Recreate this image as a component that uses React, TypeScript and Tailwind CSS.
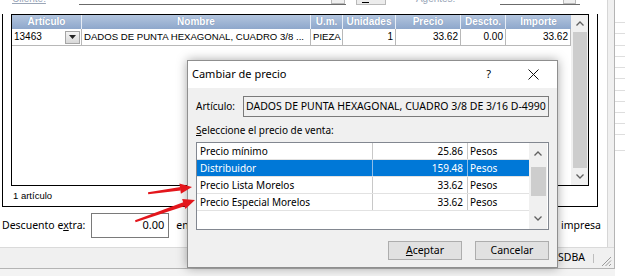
import React from "react";

const COLS = [
  { name: "Artículo", w: "w-[70px]" },
  { name: "Nombre", w: "w-[229px]" },
  { name: "U.m.", w: "w-[32px]" },
  { name: "Unidades", w: "w-[53px]" },
  { name: "Precio", w: "w-[65px]" },
  { name: "Descto.", w: "w-[45px]" },
  { name: "Importe", w: "w-[65px]" },
];

const PRECIOS = [
  { name: "Precio mínimo", price: "25.86" },
  { name: "Distribuidor", price: "159.48", selected: true },
  { name: "Precio Lista Morelos", price: "33.62" },
  { name: "Precio Especial Morelos", price: "33.62" },
];

const STRIP_LINES = [11, 12, 11, 11, 11, 12, 11, 11, 11, 11, 16];

function Chevron({ up }: { up?: boolean }) {
  return (
    <svg width="8" height="5" viewBox="0 0 8 5">
      <polyline
        points={up ? "0.5,4.5 4,1 7.5,4.5" : "0.5,0.5 4,4 7.5,0.5"}
        fill="none"
        stroke="#606060"
        strokeWidth="1.3"
      />
    </svg>
  );
}

function TopControls() {
  return (
    <div className="h-[14px] flex items-start text-[10px] text-[#9aa6b8] overflow-hidden">
      <span className="ml-[12px] -mt-[9px] underline">Cliente:</span>
      <div className="ml-[33px] w-[267px] h-[5px] border-b border-[#6b6b6b] flex justify-end">
        <div className="w-[14px] h-[4px] mr-[1px] border border-t-0 border-[#b9b9b9] bg-[#efefef]" />
      </div>
      <div className="ml-[10px] w-[30px] h-[5px] border border-t-0 border-[#b9b9b9] bg-[#ececec] flex items-end pl-[5px]">
        <div className="w-[7px] h-[1px] mb-[1px] bg-black" />
      </div>
      <span className="ml-[30px] -mt-[9px]">Agentes:</span>
      <div className="ml-[45px] w-[80px] h-[5px] border-b border-[#6b6b6b] flex justify-end">
        <div className="w-[13px] h-[4px] mr-[4px] border border-t-0 border-[#b9b9b9] bg-[#efefef]" />
      </div>
    </div>
  );
}

function Grid() {
  return (
    <div className="w-[578px] h-[172px] border border-black flex">
      <div className="w-[559px] flex flex-col">
        <div className="h-[14px] flex bg-linear-to-b from-[#b3c5de] to-[#8ea7cb] text-white font-bold text-[10px] leading-[14px] [text-shadow:0_0_1px_#6d86ad]">
          {COLS.map((c) => (
            <div key={c.name} className={`${c.w} shrink-0 text-center border-r border-[#e6ecf5] last:border-r-0`}>
              {c.name}
            </div>
          ))}
        </div>
        <div className="h-[17px] flex text-[10px] leading-[16px] border-b border-[#b8b8b8]">
          <div className="w-[70px] shrink-0 border-r border-[#b8b8b8] flex items-center justify-between pl-[2px] pr-[1px]">
            <span>13463</span>
            <div className="w-[15px] h-[13px] border border-[#a5a5a5] bg-linear-to-b from-[#f4f4f4] to-[#d8d8d8] flex items-center justify-center">
              <svg width="7" height="4" viewBox="0 0 7 4">
                <polygon points="0,0 7,0 3.5,4" fill="#222" />
              </svg>
            </div>
          </div>
          <div className="w-[229px] shrink-0 border-r border-[#b8b8b8] pl-[2px] whitespace-nowrap text-[9.6px]">
            DADOS DE PUNTA HEXAGONAL, CUADRO 3/8 ...
          </div>
          <div className="w-[32px] shrink-0 border-r border-[#b8b8b8] pl-[2px] text-[9.6px]">PIEZA</div>
          <div className="w-[53px] shrink-0 border-r border-[#b8b8b8] text-right pr-[2px]">1</div>
          <div className="w-[65px] shrink-0 border-r border-[#b8b8b8] text-right pr-[2px]">33.62</div>
          <div className="w-[45px] shrink-0 border-r border-[#b8b8b8] text-right pr-[2px]">0.00</div>
          <div className="w-[65px] shrink-0 border-r border-[#b8b8b8] text-right pr-[2px]">33.62</div>
        </div>
      </div>
      <div className="w-[17px] bg-[#f0f0f0] flex flex-col items-center">
        <div className="h-[17px] flex items-center justify-center">
          <Chevron up />
        </div>
        <div className="w-[14px] h-[136px] bg-[#cdcdcd]" />
        <div className="flex-1 flex items-center justify-center">
          <Chevron />
        </div>
      </div>
    </div>
  );
}

function Dialog() {
  return (
    <div className="absolute left-[187px] top-[60px] w-[371px] h-[208px] border border-[#8f8f8f] bg-[#f0f0f0] shadow-[0_0_10px_rgba(0,0,0,0.35)] flex flex-col font-['Noto_Sans',sans-serif]">
      <div className="h-[27px] bg-white flex items-center pl-[4px] text-[11px]">
        <span>Cambiar de precio</span>
        <span className="ml-auto text-[11px]">?</span>
        <svg width="11" height="11" viewBox="0 0 11 11" className="ml-[37px] mr-[18px]">
          <path d="M0.5 0.5 L10.5 10.5 M10.5 0.5 L0.5 10.5" stroke="#111" strokeWidth="1" />
        </svg>
      </div>
      <div className="flex flex-col px-[8px] pt-[8px] text-[10px]">
        <div className="h-[21px] flex items-center">
          <span className="w-[47px] shrink-0">Artículo:</span>
          <div className="flex-1 h-[21px] border border-[#7a7a7a] bg-[#f0f0f0] px-[2px] flex items-center whitespace-nowrap overflow-hidden text-[10.5px]">
            DADOS DE PUNTA HEXAGONAL, CUADRO 3/8 DE 3/16 D-4990
          </div>
        </div>
        <div className="mt-[6px] h-[14px] leading-[14px]">
          <span className="underline">S</span>eleccione el precio de venta:
        </div>
        <div className="mt-[5px] h-[88px] border border-[#828790] bg-white flex">
          <div className="w-[332px] flex flex-col">
            {PRECIOS.map((p) => (
              <div
                key={p.name}
                className={`h-[17px] flex leading-[16px] border-b border-[#e2e2e2] ${
                  p.selected ? "bg-[#0078d7] text-white" : ""
                }`}
              >
                <div className={`w-[176px] pl-[3px] border-r ${p.selected ? "border-[#8fbde8]" : "border-[#c8c8c8]"}`}>
                  {p.name}
                </div>
                <div className={`w-[95px] text-right pr-[4px] border-r ${p.selected ? "border-[#8fbde8]" : "border-[#c8c8c8]"}`}>
                  {p.price}
                </div>
                <div className="w-[61px] pl-[2px]">Pesos</div>
              </div>
            ))}
          </div>
          <div className="w-[18px] bg-[#f0f0f0] flex flex-col items-center">
            <div className="h-[20px] flex items-center justify-center">
              <Chevron up />
            </div>
            <div className="mt-[4px] w-[15px] h-[29px] bg-[#cdcdcd]" />
            <div className="flex-1 flex items-end justify-center pb-[8px]">
              <Chevron />
            </div>
          </div>
        </div>
        <div className="mt-[11px] flex justify-end gap-[13px]">
          <div className="w-[74px] h-[19px] border border-[#adadad] bg-[#e1e1e1] flex items-center justify-center text-[10.5px]">
            <span>
              <span className="underline">A</span>ceptar
            </span>
          </div>
          <div className="w-[74px] h-[19px] border border-[#adadad] bg-[#e1e1e1] flex items-center justify-center text-[10.5px]">
            Cancelar
          </div>
        </div>
      </div>
    </div>
  );
}

function Arrows() {
  return (
    <svg className="absolute left-0 top-0 pointer-events-none" width="625" height="276" viewBox="0 0 625 276">
      <polygon points="148,192.3 180.5,187 180.8,190.6 148.2,194.2" fill="#e3161c" />
      <polygon points="192,187 179.4,183.4 180.9,193.8" fill="#e3161c" />
      <polygon points="135,220.2 184,202.1 185.2,205.9 135.6,222.2" fill="#e3161c" />
      <polygon points="195,200 182.1,199.1 185.4,208.9" fill="#e3161c" />
    </svg>
  );
}

export default function App() {
  return (
    <div className="relative w-[625px] h-[276px] overflow-hidden bg-[#f3f3f3] flex font-['Liberation_Sans',sans-serif] text-black">
      <div className="w-[615px] h-[269px] shrink-0 flex flex-col bg-[#f0f0f0] border-r border-b border-[#b4b4b4]">
        <div className="flex">
          <div className="w-[608px] h-[247px] bg-white border-r border-[#d6d6d6] flex flex-col">
            <TopControls />
            <div className="ml-[2px] w-[596px] h-[193px] border-l border-r border-b border-black px-[8px] flex flex-col">
              <Grid />
              <div className="flex-1 flex items-center pl-[2px] text-[9.5px]">1 artículo</div>
            </div>
            <div className="flex items-center mt-[6px] h-[25px] pl-[2px] pr-[6px] text-[10.5px] font-['Noto_Sans',sans-serif]">
              <span>
                Descuento e<span className="underline">x</span>tra:
              </span>
              <div className="ml-[6px] w-[78px] h-[25px] border border-[#7a7a7a] flex items-center justify-end pr-[4px] text-[11px]">
                0.00
              </div>
              <span className="ml-[7px]">en:</span>
              <span className="ml-auto">impresa</span>
            </div>
          </div>
        </div>
        <div className="h-[21px] border-t border-[#dadada] flex items-center justify-end text-[10.5px] font-['Noto_Sans',sans-serif]">
          <span>YSDBA</span>
          <div className="ml-[8px] w-[1px] h-[9px] bg-[#bdbdbd]" />
          <svg width="12" height="12" viewBox="0 0 12 12" className="ml-[6px] mr-[2px] self-end mb-[1px]">
            <path d="M11 2 L2 11 M11 5.5 L5.5 11 M11 9 L9 11" stroke="#9a9a9a" strokeWidth="1" />
          </svg>
        </div>
      </div>
      <div className="flex-1 h-full bg-white flex flex-col pt-[22px]">
        {STRIP_LINES.map((h, i) => (
          <div key={i} className="border-t border-[#dedede]" style={{ height: h }} />
        ))}
        <div className="border-t border-[#dedede]" />
      </div>
      <Dialog />
      <Arrows />
    </div>
  );
}
